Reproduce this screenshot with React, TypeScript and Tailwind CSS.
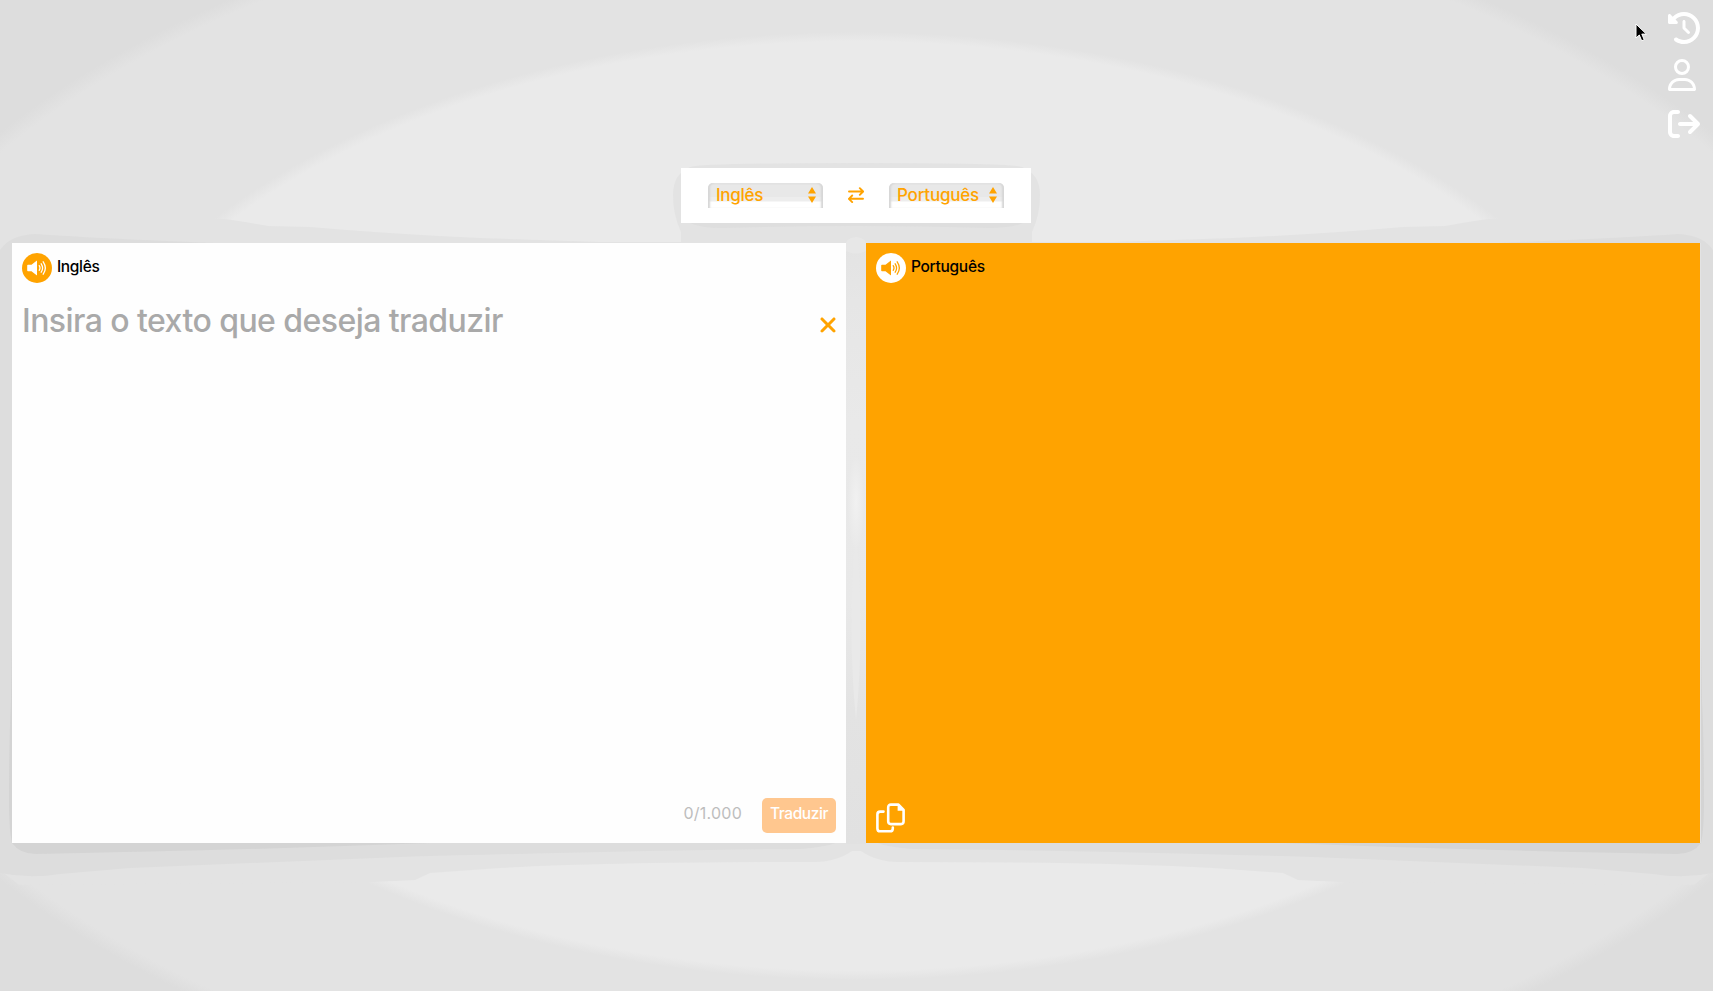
import React from "react";
import {
  FaArrowRightFromBracket,
  FaClockRotateLeft,
  FaRegUser,
  FaXmark,
} from "react-icons/fa6";

function Bands() {
  return (
    <>
      <path fill="#dddddd" d="M0 250Q10 235 35 234Q90 238 215 243H12V843H835Q825 847 800 849Q650 850 400 857L130 868L60 874Q30 879 0 873Z" />
      <path fill="#d4d4d4" d="M12 640L11 700Q9 740 9 800Q9 830 12 843Q20 854 36 854Q250 850 430 843H12Z" />
    </>
  );
}

function HalfShade() {
  return <path fill="#e3e3e3" d="M0 219H225L245 222L268 226L310 227Q390 234 480 238L600 242L681 242V843H0ZM0 843H857V851L852 851Q845 856 835 859Q826 862 815 862Q610 862 500 868L430 873L415 880L372 882L0 885Z" />;
}

function Backdrop() {
  return (
    <svg className="absolute inset-0 -z-10 h-full w-full" viewBox="0 0 1713 991" preserveAspectRatio="none" aria-hidden="true">
      <defs>
        <clipPath id="mid"><ellipse cx="856.5" cy="506" rx="1058" ry="620" /></clipPath>
        <radialGradient id="outer"><stop offset="0.98" stopColor="#e3e3e3" /><stop offset="1" stopColor="#dddddd" /></radialGradient>
        <radialGradient id="inner"><stop offset="0.98" stopColor="#eaeaea" /><stop offset="1" stopColor="#e3e3e3" /></radialGradient>
        <radialGradient id="spot"><stop offset="0" stopColor="#f1f1f1" /><stop offset="1" stopColor="#e9e9e9" /></radialGradient>
        <linearGradient id="fall" x1="0" y1="0" x2="0" y2="1">
          <stop offset="0" stopColor="#e3e3e3" /><stop offset="0.1" stopColor="#e6e6e6" /><stop offset="0.3" stopColor="#e9e9e9" />
          <stop offset="0.6" stopColor="#e8e8e8" /><stop offset="0.78" stopColor="#e3e3e3" /><stop offset="1" stopColor="#e1e1e1" />
        </linearGradient>
      </defs>
      <rect width="1713" height="991" fill="#dddddd" />
      <ellipse cx="856.5" cy="506" rx="1068" ry="626" fill="url(#outer)" />
      <ellipse cx="856.5" cy="506" rx="808" ry="474" fill="url(#inner)" />
      <g clipPath="url(#mid)"><HalfShade /></g>
      <g clipPath="url(#mid)" transform="matrix(-1 0 0 1 1713 0)"><HalfShade /></g>
      <path fill="#e3e3e3" d="M681 243V232Q673 215 673 195Q673 174 690 167Q700 163 856 163Q1012 163 1022 167Q1040 174 1040 195Q1040 215 1032 232V243Z" />
      <path fill="#dedede" d="M690 223H1023Q1012 228 990 228Q856 224 722 228Q700 228 690 223Z" />
      <Bands />
      <g transform="matrix(-1 0 0 1 1713 0)"><Bands /></g>
      <rect x="846" y="242" width="20" height="602" fill="url(#fall)" />
      <path d="M846 243Q847 238 856 237Q865 238 866 243V251Q856 256 846 251Z" fill="#e7e7e7" />
      <path d="M856 530Q865 630 856 720Q847 630 856 530Z" fill="#e9e9e9" />
      <ellipse cx="856" cy="502" rx="8" ry="46" fill="url(#spot)" />
    </svg>
  );
}

function Speaker() {
  return (
    <svg className="h-[20px] w-[20px]" viewBox="0 0 20 20" fill="none" stroke="currentColor" strokeLinecap="round" strokeWidth="1.3">
      <path d="M1 6.7H4.5L9.6 2.7Q10 2.4 10 3V17Q10 17.5 9.6 17.2L4.5 13.2H1Q.2 13.2 .2 12.4V7.5Q.2 6.7 1 6.7Z" fill="currentColor" stroke="none" />
      <path d="M12.2 7.7Q13.8 10 12.2 12.3M14.2 5.8Q17 10 14.2 14.2M16.2 3.8Q20.5 10 16.2 16.2" />
    </svg>
  );
}

function Swap() {
  return (
    <svg className="mx-[25px] h-4 w-4 shrink-0" viewBox="0 0 16 16" fill="none" stroke="currentColor" strokeWidth="1.9" strokeLinecap="round" strokeLinejoin="round">
      <path d="M1 4.5H15M11.8 1.2L15.1 4.5L11.8 7.8M15 11.8H1M4.2 8.5L.9 11.8L4.2 15.1" />
    </svg>
  );
}

function Copy() {
  return (
    <svg className="h-[30px] w-[29px]" viewBox="0 0 29 30" fill="none" stroke="white" strokeWidth="2.6" strokeLinecap="round" strokeLinejoin="round">
      <path d="M7.5 8.6H4.2Q1.4 8.6 1.4 11.5V25.4Q1.4 28.3 4.2 28.3H14Q16.8 28.3 16.8 25.4V24.5" />
      <path d="M15 1.6H22.5L27.6 6.8V18.3Q27.6 21.1 25 21.1H15Q12.2 21.1 12.2 18.3V4.4Q12.2 1.6 15 1.6Z" />
      <path d="M21.6 1.2V7.8H28Z" fill="white" stroke="none" />
    </svg>
  );
}

function Select({ label, spacing }: { label: string; spacing: string }) {
  return (
    <div className="flex h-[25px] w-[115px] items-center justify-between rounded-t-[5px] bg-[linear-gradient(#e4e4e4_0_2px,#e8e8e8_2px_14px,#ededed_14px_18px,#fff_19px)] pr-[7px] pl-[8px] shadow-[inset_3px_0_2px_-1px_#d6d6d6,inset_-3px_0_2px_-1px_#d6d6d6]">
      <span className={"pb-px text-[17px] leading-6 font-medium " + spacing}>{label}</span>
      <svg className="h-[16px] w-[8px]" viewBox="0 0 8 16" fill="currentColor">
        <path d="M0 6.5L4 0L8 6.5ZM0 9.5H8L4 16Z" />
      </svg>
    </div>
  );
}

export default function App() {
  return (
    <main className="relative isolate flex h-[991px] w-full flex-col overflow-hidden font-['Inter',sans-serif]">
      <Backdrop />
      <header className="flex h-[168px] justify-end pr-[13px] text-white">
        <nav className="flex w-8 flex-col pt-3 text-[32px]">
          <FaClockRotateLeft />
          <FaRegUser className="mt-[15px] w-7" />
          <FaArrowRightFromBracket className="mt-[17px]" />
        </nav>
      </header>

      <section className="ml-[681px] flex h-[55px] w-[350px] items-center bg-white px-[27px] pb-px text-[#ffa300]">
        <Select label="Inglês" spacing="tracking-[-0.3px]" />
        <Swap />
        <Select label="Português" spacing="tracking-[-0.2px]" />
      </section>

      <div className="mt-5 flex gap-5 px-3">
        <section className="flex h-[600px] w-[834px] flex-col bg-[#fefefe] p-[10px]">
          <div className="flex h-[30px] gap-[5px]">
            <span className="flex h-[30px] w-[30px] items-center justify-center rounded-full bg-[#ffa300] text-white"><Speaker /></span>
            <span className="pt-[2px] text-[15.5px] leading-6 font-medium tracking-[-0.35px] text-black">Inglês</span>
          </div>
          <div className="mt-[15px] flex items-start justify-between">
            <span className="pt-[3px] text-[32px] leading-[40px] font-medium tracking-[-0.56px] text-[#a9a9a9]">Insira o texto que deseja traduzir</span>
            <FaXmark className="mt-[15px] -mr-[4px] h-[24px] w-[24px] text-[#ffa300]" />
          </div>
          <footer className="mt-auto flex h-[35px] items-start justify-end">
            <span className="mr-[20px] pt-[3px] text-[16px] leading-6 tracking-[0.25px] text-[#bdbdbd]">0/1.000</span>
            <button className="h-[35px] w-[74px] rounded-[5px] bg-[#ffc78f] pb-[4px] text-[15.5px] font-medium tracking-[-0.4px] text-white">Traduzir</button>
          </footer>
        </section>

        <section className="flex h-[600px] w-[834px] flex-col justify-between bg-[#ffa300] p-[10px]">
          <div className="flex h-[30px] gap-[5px]">
            <span className="flex h-[30px] w-[30px] items-center justify-center rounded-full bg-white text-[#ffa300]"><Speaker /></span>
            <span className="pt-[2px] text-[15.5px] leading-6 font-medium tracking-[-0.3px] text-black">Português</span>
          </div>
          <Copy />
        </section>
      </div>

      <svg className="absolute top-[23px] left-[1635px] h-[20px] w-[13px]" viewBox="0 0 13 20">
        <path d="M1 1V15L4.3 12L6.7 17.8L9.2 16.7L6.8 11.1H11.4Z" fill="black" stroke="white" strokeWidth="1" />
      </svg>
    </main>
  );
}
